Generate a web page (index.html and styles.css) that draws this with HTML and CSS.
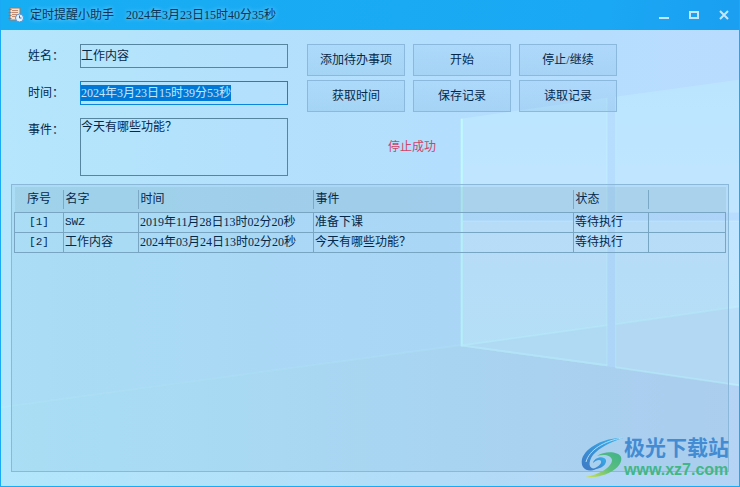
FILE: index.html
```html
<!DOCTYPE html>
<html lang="zh-CN">
<head>
    <meta charset="UTF-8">
    <meta name="viewport" content="width=device-width, initial-scale=1.0">
    <title>定时提醒小助手</title>
    <link rel="stylesheet" href="styles.css">
</head>
<body>

    <div class="window">
        <!-- Wallpaper -->
        <svg class="wallpaper" viewBox="0 0 740 487" preserveAspectRatio="none" aria-hidden="true">
            <defs>
                <linearGradient id="base" x1="0" y1="0" x2="1" y2="0">
                    <stop offset="0" stop-color="#b5e6fc"/>
                    <stop offset="0.35" stop-color="#b3e0fc"/>
                    <stop offset="0.6" stop-color="#b4defd"/>
                    <stop offset="1" stop-color="#b8dcff"/>
                </linearGradient>
                <linearGradient id="floor" x1="0" y1="0" x2="1" y2="0">
                    <stop offset="0" stop-color="#b3e7fc"/>
                    <stop offset="0.6" stop-color="#b2dcf8"/>
                    <stop offset="1" stop-color="#b5d4f5"/>
                </linearGradient>
                <linearGradient id="pane" gradientUnits="userSpaceOnUse" x1="0" y1="90" x2="0" y2="360">
                    <stop offset="0" stop-color="#bbe5ff"/>
                    <stop offset="0.5" stop-color="#c2e5ff"/>
                    <stop offset="1" stop-color="#bfe8fd"/>
                </linearGradient>
            </defs>
            <rect width="740" height="487" fill="url(#base)"/>
            <polygon points="0,408 461,346 740,386 740,487 0,487" fill="url(#floor)"/>
            <polygon points="461,119 608,98 608,213 461,213" fill="url(#pane)"/>
            <polygon points="616,97 740,80 740,213 616,213" fill="url(#pane)"/>
            <polygon points="461,221 608,221 608,367 461,347" fill="url(#pane)"/>
            <polygon points="616,221 740,221 740,386 616,368" fill="url(#pane)"/>
            <polygon points="461,347 608,326 608,367" fill="#bbe2fa"/>
            <polygon points="616,325 740,307 740,386 616,368" fill="#bde0fa"/>
            <g fill="none" stroke="#c0f4ff">
                <path d="M0 408L461 346" stroke-opacity="0.2" stroke-width="2"/>
                <path d="M462 346L608 326M616 325L740 307" stroke-opacity="0.5" stroke-width="2"/>
                <path d="M462 119V347" stroke="#bdfbff" stroke-width="2"/>
                <path d="M461 346L608 366M616 368L740 386" stroke-opacity="0.6" stroke-width="2"/>
                <path d="M607.5 98V366M616.5 97V368M461 222H608M616 222H740" stroke-opacity="0.5"/>
            </g>
        </svg>

        <!-- Title Bar -->
        <header class="title-bar">
            <svg class="app-icon" viewBox="0 0 16 16" aria-hidden="true">
                <rect x="2" y="1" width="10" height="12" fill="#f3e3cf" stroke="#9a7a6c"/>
                <path d="M4 3.500h6M4 5.500h6M4 7.500h5M4 9.500h4" stroke="#c08a72"/>
                <path d="M0.500 2.500h3M0.500 5.500h3M0.500 8.500h3M0.500 11.500h3" stroke="#6f7f94"/>
                <circle cx="11.500" cy="11" r="4" fill="#e6f3ff" stroke="#5b8fd0"/>
                <path d="M11.500 8.500V11h2" fill="none" stroke="#3a6cae"/>
            </svg>
            <h1 class="app-title">定时提醒小助手</h1>
            <span class="clock">2024年3月23日15时40分35秒</span>
            <div class="window-controls">
                <button type="button" aria-label="最小化">
                    <svg viewBox="0 0 10 10"><path d="M0 8h10" stroke-width="2"/></svg>
                </button>
                <button type="button" aria-label="最大化">
                    <svg viewBox="0 0 10 10"><path d="M1 2h8v6H1z" stroke-width="2"/></svg>
                </button>
                <button type="button" aria-label="关闭">
                    <svg viewBox="0 0 10 10"><path d="M1 1l8 8M9 1l-8 8" stroke-width="2"/></svg>
                </button>
            </div>
        </header>

        <main class="content">
            <form class="top">
                <div class="fields">
                    <label for="name">姓名：</label>
                    <input type="text" id="name" value="工作内容">
                    <label for="time">时间：</label>
                    <input type="text" id="time" value="2024年3月23日15时39分53秒" autofocus>
                    <label for="event">事件：</label>
                    <textarea id="event">今天有哪些功能？</textarea>
                </div>
                <div class="actions">
                    <div class="buttons">
                        <button type="button">添加待办事项</button>
                        <button type="button">开始</button>
                        <button type="button">停止/继续</button>
                        <button type="button">获取时间</button>
                        <button type="button">保存记录</button>
                        <button type="button">读取记录</button>
                    </div>
                    <output class="status">停止成功</output>
                </div>
            </form>

            <!-- Task List -->
            <section class="list">
                <table>
                    <colgroup>
                        <col class="col-no">
                        <col class="col-name">
                        <col class="col-time">
                        <col class="col-event">
                        <col class="col-state">
                        <col>
                    </colgroup>
                    <thead>
                        <tr><th>序号</th><th>名字</th><th>时间</th><th>事件</th><th>状态</th><th></th></tr>
                    </thead>
                    <tbody>
                        <tr><td class="latin">[1]</td><td class="latin">SWZ</td><td>2019年11月28日13时02分20秒</td><td>准备下课</td><td>等待执行</td><td></td></tr>
                        <tr><td class="latin">[2]</td><td>工作内容</td><td>2024年03月24日13时02分20秒</td><td>今天有哪些功能？</td><td>等待执行</td><td></td></tr>
                    </tbody>
                </table>
            </section>
        </main>

        <!-- Watermark -->
        <div class="watermark">
            <svg viewBox="0 0 44 42" aria-hidden="true">
                <defs>
                    <linearGradient id="blue" x1="0" y1="1" x2="1" y2="0">
                        <stop offset="0" stop-color="#3f78c4"/>
                        <stop offset="1" stop-color="#35b2ee"/>
                    </linearGradient>
                    <linearGradient id="green" x1="0" y1="1" x2="1" y2="0">
                        <stop offset="0" stop-color="#d6e34a"/>
                        <stop offset="0.5" stop-color="#5cbf7d"/>
                        <stop offset="1" stop-color="#3fb28a"/>
                    </linearGradient>
                </defs>
                <path d="M43 1C27 0 6 9 2 22C0 32 8 36 16 32C8 32 8 25 13 18C20 10 31 5 43 1Z" fill="url(#blue)"/>
                <path d="M12 32C20 33 27 28 26 23C24 18 14 20 13 26C16 23 20 22 21 24C22 27 17 31 12 32Z" fill="url(#blue)"/>
                <path d="M17 19C24 14 38 14 41 20C44 30 25 42 5 40C19 38 32 30 32 23C31 18 24 17 17 19Z" fill="url(#green)"/>
                <path d="M42 1C24 4 9 13 6 25" fill="none" stroke="#b4def5"/>
            </svg>
            <div class="watermark-text">
                <strong>极光下载站</strong>
                <span>www.xz7.com</span>
            </div>
        </div>
    </div>

    <script>
        // Select the time so it can be typed over
        const timeInput = document.getElementById('time');
        timeInput.focus();
        timeInput.select();
    </script>

</body>
</html>
```

FILE: styles.css
```css
* {
    box-sizing: border-box;
}

body {
    margin: 0;
    font-family: "Liberation Serif", "Noto Sans CJK SC", serif;
    font-size: 12px;
    line-height: 16px;
    color: #06294a;
}

button,
input,
textarea {
    font: inherit;
    color: inherit;
    margin: 0;
    border-radius: 0;
}

.window {
    position: relative;
    display: flex;
    flex-direction: column;
    min-height: 100vh;
    border: 1px solid #1aa9f4;
    border-top: 0;
    overflow: hidden;
}

.wallpaper {
    position: absolute;
    top: 0;
    left: 0;
    width: 100%;
    height: 100%;
    z-index: -1;
}

/* Title Bar */
.title-bar {
    display: flex;
    align-items: center;
    height: 30px;
    padding-left: 7px;
    background: linear-gradient(100deg, #17aef3, #1aa8f4 80%, #1a9ff1);
    color: #073458;
    text-shadow: 0 0 4px rgba(255, 255, 255, 0.6);
}

.app-icon {
    width: 16px;
    height: 16px;
    margin-right: 6px;
}

.app-title {
    margin: 0 12px 0 0;
    font-size: 12px;
    font-weight: normal;
}

.window-controls {
    display: flex;
    margin-left: auto;
}

.window-controls button {
    display: flex;
    align-items: center;
    justify-content: center;
    width: 30px;
    height: 30px;
    padding: 0;
    border: 0;
    background: none;
}

.window-controls svg {
    width: 10px;
    height: 10px;
    fill: none;
    stroke: #c3e6fc;
}

.content {
    flex: 1;
    display: flex;
    flex-direction: column;
    padding: 14px 10px;
}

/* Form */
.top {
    display: flex;
    gap: 19px;
    padding-left: 17px;
    margin-bottom: 8px;
}

.fields {
    display: grid;
    grid-template-columns: 52px 208px;
    grid-template-rows: 24px 24px 58px;
    row-gap: 13px;
}

.fields label {
    padding-top: 4px;
}

.fields input,
.fields textarea {
    width: 100%;
    padding: 0;
    border: 1px solid #56859f;
    background: transparent;
    outline: none;
    resize: none;
}

.fields input:focus {
    border-color: #0a85dc;
}

.fields ::selection {
    background: #0078d7;
    color: #c4e6fb;
}

.buttons {
    display: grid;
    grid-template-columns: repeat(3, 98px);
    gap: 4px 8px;
}

.buttons button {
    height: 32px;
    padding: 0;
    border: 1px solid #8bb9de;
    background: linear-gradient(rgba(120, 180, 235, 0.12), rgba(120, 180, 220, 0.25));
}

.status {
    display: block;
    width: 210px;
    margin-top: 27px;
    text-align: center;
    color: #cd4569;
}

/* Task List */
.list {
    flex: 1;
    padding: 2px;
    border: 1px solid #8bb8d8;
    background: rgba(40, 110, 160, 0.07);
}

.list table {
    width: 100%;
    table-layout: fixed;
    border-collapse: collapse;
}

.col-no {
    width: 49px;
}

.col-name,
.col-state {
    width: 75px;
}

.col-time {
    width: 175px;
}

.col-event {
    width: 260px;
}

.list th {
    height: 25px;
    padding: 0 0 0 2px;
    background: rgba(90, 140, 160, 0.12);
    font-weight: normal;
    text-align: left;
}

/* Short dividers that stop before the header edges */
.list th:not(:last-child) {
    background-image: linear-gradient(#7ba9c5, #7ba9c5);
    background-size: 1px 19px;
    background-position: right 3px;
    background-repeat: no-repeat;
}

.list td {
    height: 20px;
    padding: 0 0 0 1px;
    border: 1px solid #78a5c2;
    line-height: 16px;
    vertical-align: middle;
    white-space: nowrap;
}

.list th:first-child,
.list td:first-child {
    padding: 0;
    text-align: center;
}

.list .latin {
    font-family: "Liberation Mono", monospace;
    font-size: 11px;
}

/* Watermark */
.watermark {
    position: absolute;
    right: 10px;
    bottom: 6px;
    display: flex;
    align-items: center;
    pointer-events: none;
}

.watermark svg {
    width: 44px;
    height: 42px;
}

.watermark-text {
    display: flex;
    flex-direction: column;
    font-family: "Liberation Sans", "Noto Sans CJK SC", sans-serif;
}

.watermark-text strong {
    font-size: 21px;
    line-height: 24px;
    color: #438bd2;
}

.watermark-text span {
    font-size: 16px;
    font-weight: bold;
    line-height: 20px;
    color: #43b686;
}
```
